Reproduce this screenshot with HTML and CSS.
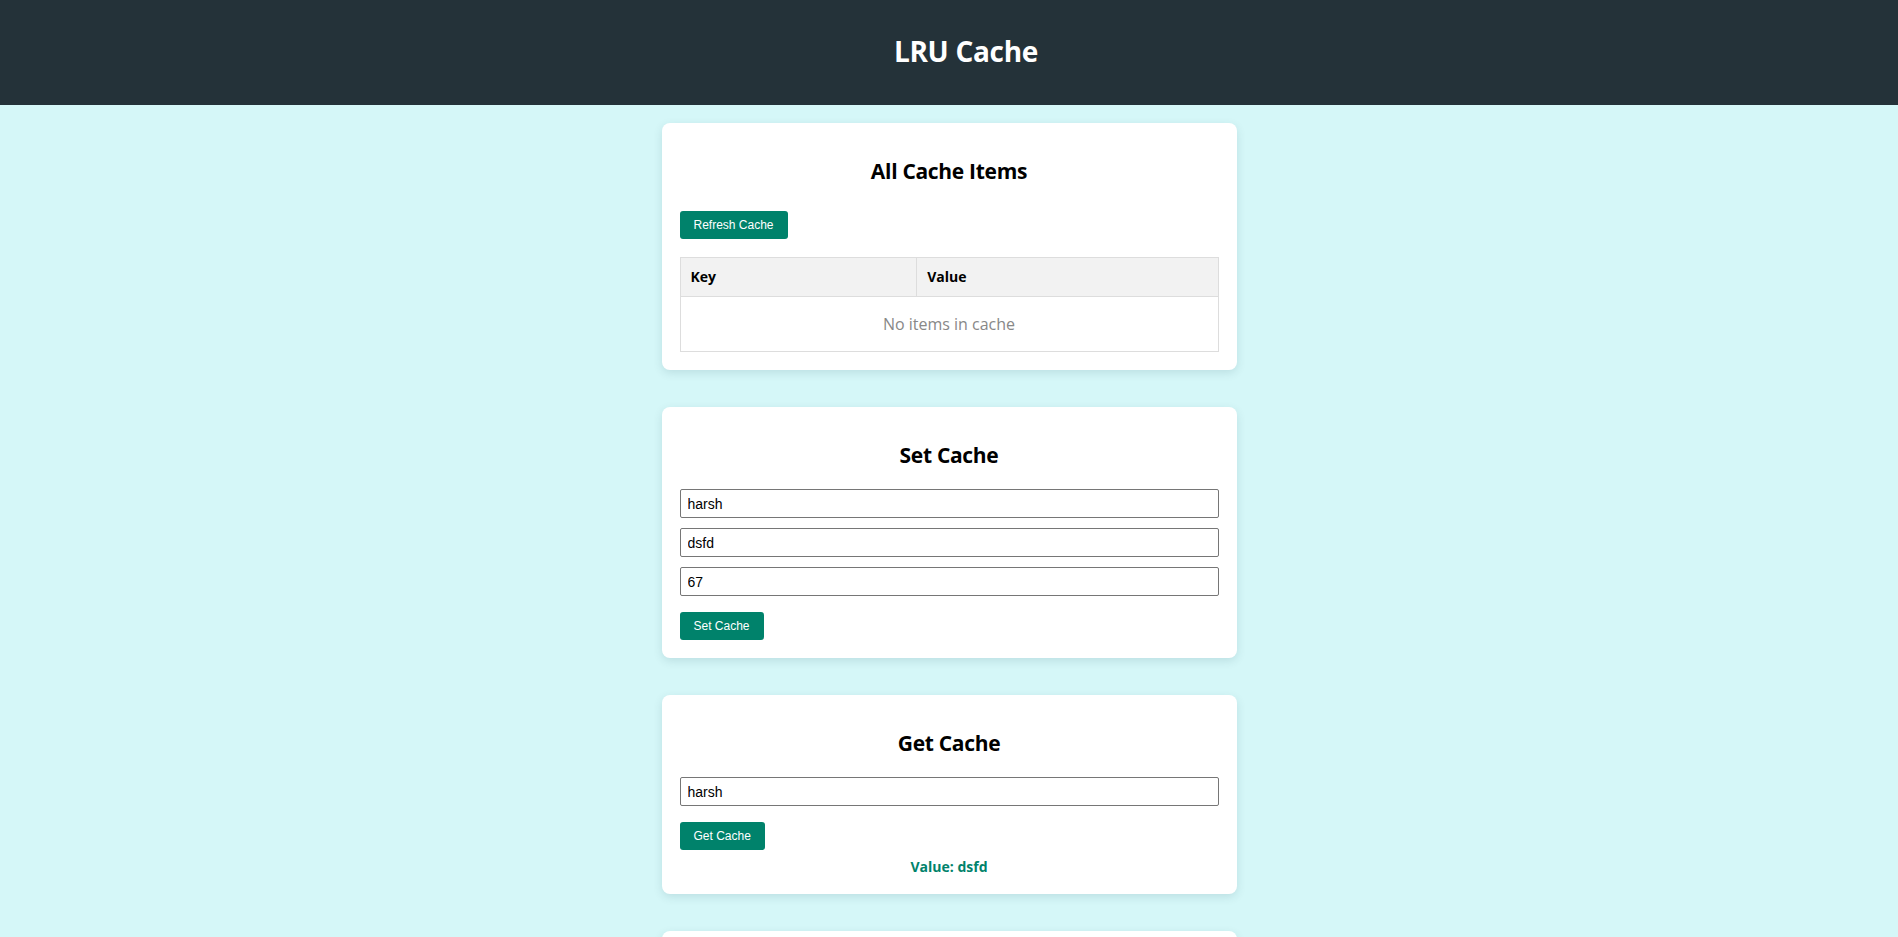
FILE: index.html
```html
<!DOCTYPE html>
<html lang="en">
<head>
<meta charset="utf-8">
<title>LRU Cache</title>
<link rel="stylesheet" href="styles.css">
</head>
<body>
<header class="topbar">
  <h1 class="topbar-title">LRU Cache</h1>
</header>
<main class="content">
  <section class="card">
    <h2 class="card-title">All Cache Items</h2>
    <button class="btn" type="button">Refresh Cache</button>
    <table class="cache-table">
      <thead>
        <tr><th class="col-key">Key</th><th>Value</th></tr>
      </thead>
      <tbody>
        <tr><td class="empty" colspan="2">No items in cache</td></tr>
      </tbody>
    </table>
  </section>

  <section class="card">
    <h2 class="card-title">Set Cache</h2>
    <input class="field" type="text" value="harsh">
    <input class="field" type="text" value="dsfd">
    <input class="field" type="text" value="67">
    <button class="btn" type="button">Set Cache</button>
  </section>

  <section class="card">
    <h2 class="card-title">Get Cache</h2>
    <input class="field" type="text" value="harsh">
    <button class="btn" type="button">Get Cache</button>
    <p class="result">Value: dsfd</p>
  </section>

  <section class="card">
    <h2 class="card-title">Delete Cache</h2>
    <input class="field" type="text" value="">
    <button class="btn" type="button">Delete Cache</button>
  </section>
</main>
</body>
</html>
```

FILE: styles.css
```css
* { box-sizing: border-box; }

html, body {
  margin: 0;
  padding: 0;
}

body {
  background: #d5f7f8;
  font-family: "Open Sans", "Noto Sans", sans-serif;
  color: #000;
}

.topbar {
  background: #243239;
  height: 105px;
  display: flex;
  align-items: center;
  justify-content: center;
}

.topbar-title {
  margin: 0 0 0 34px;
  color: #fff;
  font-size: 28px;
  font-weight: 700;
  line-height: 34px;
  letter-spacing: -0.3px;
  padding-bottom: 4px;
}

.content {
  display: flex;
  flex-direction: column;
  align-items: center;
  gap: 37px;
  padding-top: 18px;
  padding-bottom: 40px;
}

.card {
  width: 575px;
  display: flex;
  flex-direction: column;
  background: #fff;
  border-radius: 8px;
  padding: 18px;
  box-shadow: 0 3px 10px rgba(0, 60, 70, 0.12);
}

.card-title {
  margin: 17px 0 21px;
  text-align: center;
  font-size: 21px;
  line-height: 26px;
  font-weight: 700;
  letter-spacing: -0.3px;
}

.btn {
  align-self: flex-start;
  margin: 6px 0 0;
  background: #00826b;
  color: #fff;
  border: none;
  border-radius: 3px;
  font-family: "Liberation Sans", Arial, sans-serif;
  font-size: 12px;
  line-height: 14px;
  padding: 7px 14px;
  cursor: pointer;
}

.cache-table {
  width: 100%;
  margin-top: 18px;
  border-collapse: collapse;
  border: 1px solid #ddd;
}

.cache-table th {
  background: #f2f2f2;
  border: 1px solid #ddd;
  padding: 10px;
  text-align: left;
  font-size: 14px;
  line-height: 18px;
  font-weight: 700;
}

.cache-table .col-key {
  width: 44%;
}

.cache-table td {
  border: 1px solid #ddd;
}

.empty {
  text-align: center;
  color: #888;
  font-size: 16px;
  line-height: 22px;
  padding: 16px;
}

.field {
  width: 100%;
  height: 29px;
  margin: 0 0 10px;
  padding: 6px 7px;
  border: 1px solid #767676;
  border-radius: 2px;
  font-family: "Liberation Sans", Arial, sans-serif;
  font-size: 14px;
  color: #000;
  background: #fff;
}

.result {
  margin: 8px 0 0;
  text-align: center;
  color: #00826b;
  font-weight: 700;
  font-size: 14px;
  line-height: 18px;
}
```
